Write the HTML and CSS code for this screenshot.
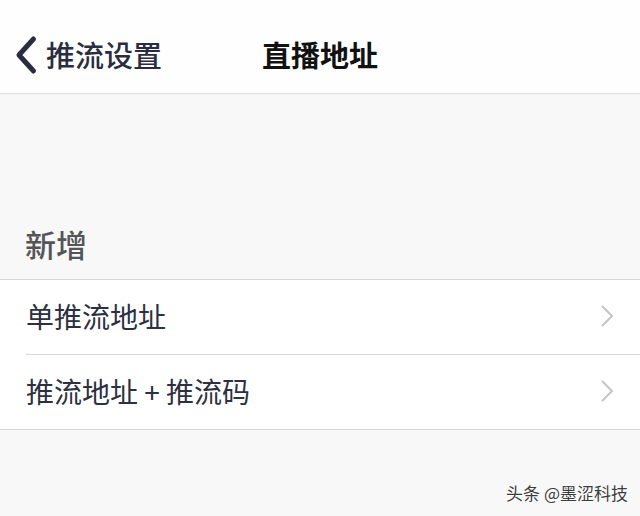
FILE: index.html
```html
<!DOCTYPE html>
<html lang="zh">
<head>
<meta charset="utf-8">
<link rel="stylesheet" href="styles.css">
</head>
<body>
<div class="screen">
  <header class="nav">
    <div class="back">
      <svg class="back-icon" width="24" height="40" viewBox="0 0 24 40"><path d="M19.5 4 L5 20 L19.5 36" fill="none" stroke="#2a2d3f" stroke-width="5" stroke-linecap="round" stroke-linejoin="round"/></svg>
      <span class="back-text">推流设置</span>
    </div>
    <div class="title">直播地址</div>
  </header>
  <main class="content">
    <div class="section-title">新增</div>
    <div class="group">
      <div class="row">
        <span class="row-text">单推流地址</span>
        <svg class="chev" width="14" height="24" viewBox="0 0 14 24"><path d="M2 2 L12 12 L2 22" fill="none" stroke="#c4c4c8" stroke-width="2"/></svg>
      </div>
      <div class="row">
        <span class="row-text">推流地址 + 推流码</span>
        <svg class="chev" width="14" height="24" viewBox="0 0 14 24"><path d="M2 2 L12 12 L2 22" fill="none" stroke="#c4c4c8" stroke-width="2"/></svg>
      </div>
    </div>
  </main>
  <div class="watermark">头条 @墨涩科技</div>
</div>
</body>
</html>
```
FILE: styles.css
```css
* { box-sizing: border-box; }
html, body { margin: 0; padding: 0; }
body {
  font-family: "Noto Sans CJK SC", "Noto Sans", sans-serif;
  background: #f8f8f8;
}
.screen {
  position: relative;
  width: 640px;
  height: 516px;
  overflow: hidden;
  background: #f8f8f8;
}
.nav {
  position: relative;
  height: 94px;
  padding-top: 16px;
  background: #fefefe;
  border-bottom: 1px solid #dcdcdc;
  display: flex;
  align-items: center;
  justify-content: center;
}
.back {
  position: absolute;
  left: 14px;
  top: 16px;
  bottom: 0;
  display: flex;
  align-items: center;
  gap: 8px;
}
.back-icon { display: block; }
.back-text {
  font-size: 29px;
  font-weight: 500;
  color: #2a2d3f;
  line-height: 1;
}
.title {
  font-size: 29px;
  font-weight: 700;
  color: #111;
  line-height: 1;
}
.content {
  display: flex;
  flex-direction: column;
}
.section-title {
  height: 185px;
  display: flex;
  align-items: flex-end;
  padding-left: 25px;
  padding-bottom: 20px;
  font-size: 31px;
  font-weight: 500;
  color: #555558;
  line-height: 1;
}
.group {
  background: #fff;
  border-top: 1px solid #d6d6d6;
  border-bottom: 1px solid #d6d6d6;
  padding-left: 26px;
}
.row {
  height: 74px;
  display: flex;
  align-items: center;
  justify-content: space-between;
  padding-right: 26px;
  padding-bottom: 2px;
}
.row + .row {
  border-top: 1px solid #d6d6d6;
  height: 75px;
}
.row-text {
  font-size: 28px;
  color: #2d3040;
  line-height: 1;
  white-space: pre;
}
.chev { display: block; }
.watermark {
  position: absolute;
  right: 12px;
  bottom: 15px;
  font-size: 17px;
  color: #3c3c3c;
  line-height: 1;
  text-shadow: 0 0 2px #fff, 1px 1px 0 #fff;
}
```
